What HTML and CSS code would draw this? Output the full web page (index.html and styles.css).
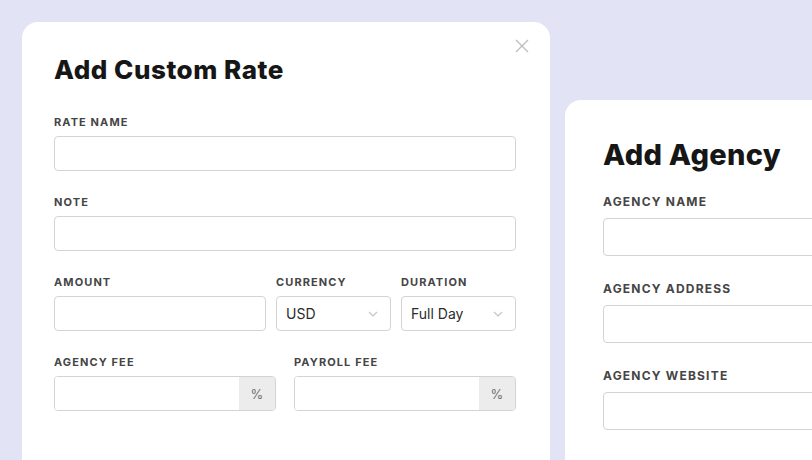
FILE: index.html
```html
<!DOCTYPE html>
<html lang="en">

<head>
    <meta charset="UTF-8">
    <title>Rates &amp; Agencies</title>
    <meta name="viewport" content="width=device-width, initial-scale=1.0">
    <link rel="stylesheet" href="styles.css">
</head>

<body>
    <main class="desk">
        <section class="modal rate-modal">
            <button type="button" class="close" aria-label="Close">
                <svg width="14" height="14" viewBox="0 0 14 14">
                    <path d="M1 1 L13 13 M13 1 L1 13" stroke="#bdbdbd" stroke-width="1.3" fill="none" />
                </svg>
            </button>
            <h1>Add Custom Rate</h1>
            <form class="fields">
                <div class="field">
                    <label for="rate-name">Rate Name</label>
                    <input type="text" id="rate-name">
                </div>
                <div class="field">
                    <label for="rate-note">Note</label>
                    <input type="text" id="rate-note">
                </div>
                <div class="row row-three">
                    <div class="field">
                        <label for="amount">Amount</label>
                        <input type="text" id="amount">
                    </div>
                    <div class="field">
                        <label for="currency">Currency</label>
                        <div class="select" id="currency">
                            <span>USD</span>
                            <svg width="10" height="6" viewBox="0 0 10 6">
                                <path d="M1 1 L5 5 L9 1" stroke="#c4c4c4" stroke-width="1.1" fill="none" />
                            </svg>
                        </div>
                    </div>
                    <div class="field">
                        <label for="duration">Duration</label>
                        <div class="select" id="duration">
                            <span>Full Day</span>
                            <svg width="10" height="6" viewBox="0 0 10 6">
                                <path d="M1 1 L5 5 L9 1" stroke="#c4c4c4" stroke-width="1.1" fill="none" />
                            </svg>
                        </div>
                    </div>
                </div>
                <div class="row row-two">
                    <div class="field">
                        <label for="agency-fee">Agency Fee</label>
                        <div class="addon-input">
                            <input type="text" id="agency-fee">
                            <span class="addon">%</span>
                        </div>
                    </div>
                    <div class="field">
                        <label for="payroll-fee">Payroll Fee</label>
                        <div class="addon-input">
                            <input type="text" id="payroll-fee">
                            <span class="addon">%</span>
                        </div>
                    </div>
                </div>
            </form>
        </section>

        <section class="modal agency-modal">
            <h1>Add Agency</h1>
            <form class="fields">
                <div class="field">
                    <label for="agency-name">Agency Name</label>
                    <input type="text" id="agency-name">
                </div>
                <div class="field">
                    <label for="agency-address">Agency Address</label>
                    <input type="text" id="agency-address">
                </div>
                <div class="field">
                    <label for="agency-website">Agency Website</label>
                    <input type="text" id="agency-website">
                </div>
            </form>
        </section>
    </main>
</body>

</html>
```

FILE: styles.css
```css
body {
    margin: 0;
    padding: 0;
    font-family: Inter, "Noto Sans", sans-serif;
    background: #e3e3f6;
    color: #1a1a1a;
    overflow: hidden;
}

.desk {
    display: flex;
    align-items: flex-start;
    gap: 15px;
    padding: 22px 0 0 22px;
    height: 460px;
    box-sizing: border-box;
    overflow: hidden;
}

.modal {
    position: relative;
    background: #ffffff;
    border-radius: 16px;
    box-sizing: border-box;
    flex-shrink: 0;
}

.modal h1 {
    margin: 0;
    font-weight: 800;
    color: #161616;
}

.fields {
    display: flex;
    flex-direction: column;
}

.field {
    display: flex;
    flex-direction: column;
}

label {
    font-weight: 700;
    text-transform: uppercase;
    letter-spacing: 0.1em;
    color: #454545;
}

input,
.select {
    box-sizing: border-box;
    width: 100%;
    border: 1px solid #d3d3d3;
    border-radius: 4px;
    background: #ffffff;
    font-family: inherit;
    margin: 0;
}

/* custom rate modal */

.rate-modal {
    width: 528px;
    height: 480px;
    padding: 33px 34px 0 32px;
}

.rate-modal h1 {
    font-size: 26px;
    line-height: 30px;
    letter-spacing: 0.02em;
    margin-bottom: 30px;
}

.rate-modal .fields {
    gap: 24px;
}

.rate-modal label {
    font-size: 11px;
    line-height: 14px;
    margin-bottom: 7px;
}

.rate-modal input,
.rate-modal .select {
    height: 35px;
}

.close {
    position: absolute;
    top: 17px;
    right: 21px;
    padding: 0;
    border: none;
    background: none;
    cursor: pointer;
}

.row {
    display: grid;
}

.row-three {
    grid-template-columns: 1fr 115px 115px;
    gap: 10px;
}

.row-two {
    grid-template-columns: 1fr 1fr;
    gap: 18px;
}

.select {
    display: flex;
    align-items: center;
    justify-content: space-between;
    padding: 0 12px 0 9px;
    font-size: 14px;
    color: #2b2b2b;
}

.addon-input {
    display: flex;
    height: 35px;
    border: 1px solid #d3d3d3;
    border-radius: 4px;
    overflow: hidden;
    box-sizing: border-box;
}

.addon-input input {
    border: none;
    border-radius: 0;
    height: 100%;
    flex: 1;
}

.addon {
    width: 36px;
    display: flex;
    align-items: center;
    justify-content: center;
    background: #ececec;
    color: #707070;
    font-size: 13px;
}

/* agency modal */

.agency-modal {
    width: 300px;
    height: 400px;
    margin-top: 78px;
    padding: 38px 0 0 38px;
}

.agency-modal h1 {
    font-size: 29px;
    line-height: 33px;
    letter-spacing: 0.01em;
    margin-bottom: 23px;
}

.agency-modal .fields {
    gap: 25px;
}

.agency-modal label {
    font-size: 12px;
    line-height: 15px;
    margin-bottom: 9px;
}

.agency-modal input {
    height: 38px;
}
```
